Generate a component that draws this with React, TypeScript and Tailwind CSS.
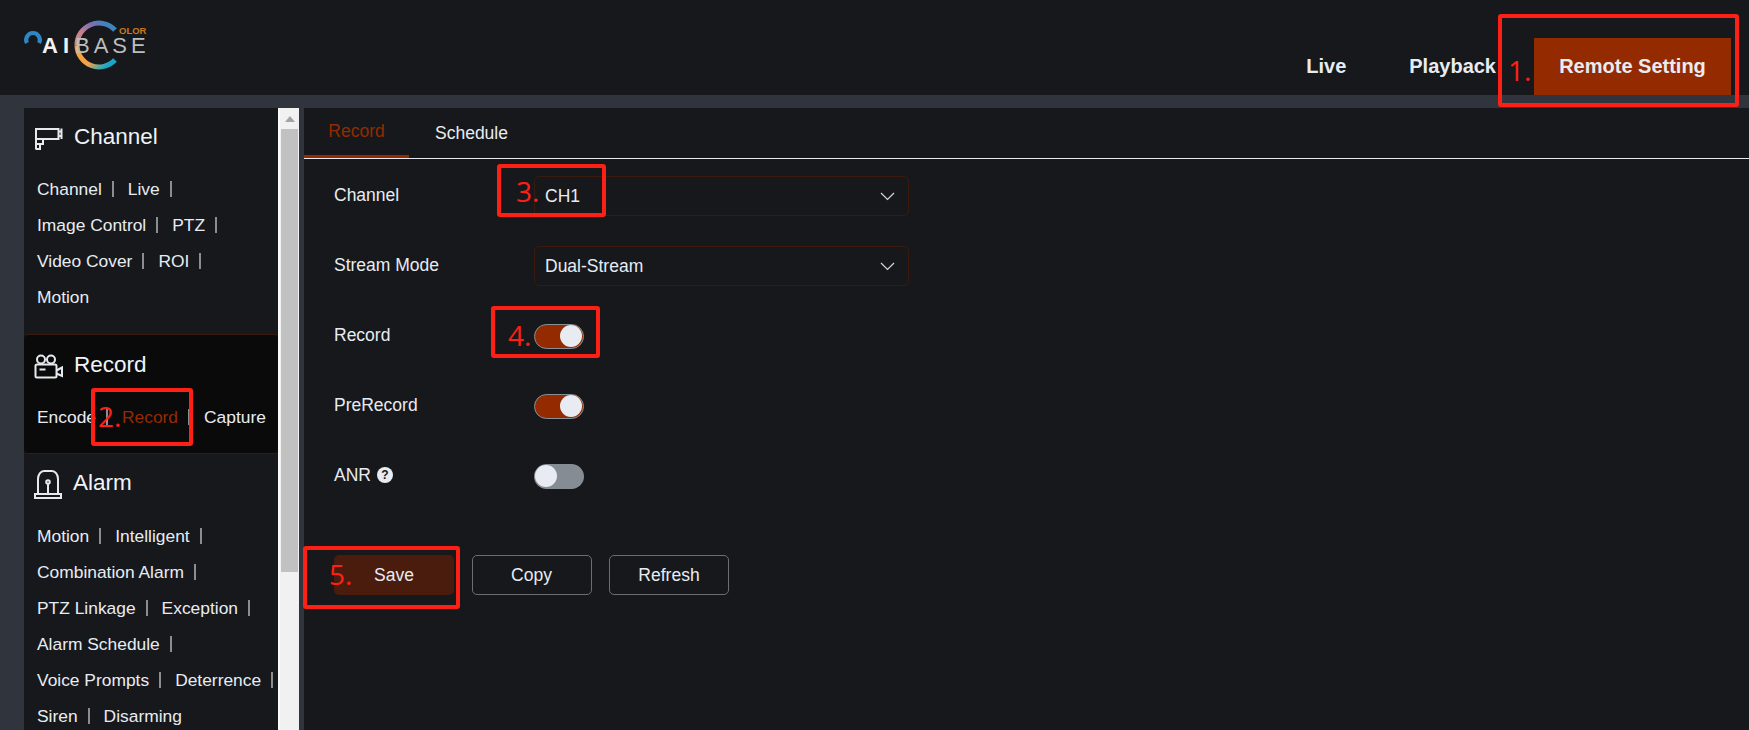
const channelLinks = [["Channel", "Live"], ["Image Control", "PTZ"], ["Video Cover", "ROI"], ["Motion"]];
const alarmLinks = [
  ["Motion", "Intelligent"],
  ["Combination Alarm"],
  ["PTZ Linkage", "Exception"],
  ["Alarm Schedule"],
  ["Voice Prompts", "Deterrence"],
  ["Siren", "Disarming"],
];

function Logo() {
  return (
    <svg width="130" height="60" viewBox="0 0 130 60" className="mt-[16px] ml-[22px]">
      <defs>
        <linearGradient id="ringTop" x1="1" y1="0" x2="0" y2="0.8">
          <stop offset="0" stopColor="#1d8fc4" />
          <stop offset="0.4" stopColor="#7a6fb4" />
          <stop offset="0.75" stopColor="#c97f8f" />
          <stop offset="1" stopColor="#c99078" />
        </linearGradient>
        <linearGradient id="ringBottom" x1="0" y1="0" x2="1" y2="0.6">
          <stop offset="0" stopColor="#f7a335" />
          <stop offset="0.6" stopColor="#f2a24a" />
          <stop offset="1" stopColor="#12a9c9" />
        </linearGradient>
      </defs>
      <path d="M5 27A6.8 6.8 0 1 1 17 27" fill="none" stroke="#2f86c4" strokeWidth="4.2" />
      <path d="M93 14A22 22 0 0 0 55 29.5" fill="none" stroke="url(#ringTop)" strokeWidth="5" />
      <path d="M55 29.5A22 22 0 0 0 93 44" fill="none" stroke="url(#ringBottom)" strokeWidth="5" />
      <text x="97" y="17.5" fontFamily="Liberation Sans, sans-serif" fontWeight="700" fontSize="9.5" fill="#c9771c">OLOR</text>
      <text x="20" y="37" fontFamily="Liberation Sans, sans-serif" fontWeight="700" fontSize="22" letterSpacing="5" fill="#f2f2f2">AI</text>
      <text x="53" y="37" fontFamily="Liberation Sans, sans-serif" fontSize="22" letterSpacing="4" fill="#bdbdbd">BASE</text>
    </svg>
  );
}

function CameraIcon() {
  return (
    <svg width="29" height="25" viewBox="0 0 29 25" fill="none" stroke="#e6e9ee" strokeWidth="2">
      <path d="M2 3h22.5v10H2z" />
      <path d="M24.5 5.5h3M24.5 10h3" />
      <path d="M27.5 2.5v10.5" />
      <path d="M9 13v5H2M2 13v10.5M2 23h4v-5" />
    </svg>
  );
}

function RecordIcon() {
  return (
    <svg width="29" height="25" viewBox="0 0 29 25" fill="none" stroke="#e6e9ee" strokeWidth="2">
      <circle cx="7" cy="5.5" r="4" />
      <circle cx="17" cy="5.5" r="4" />
      <rect x="1.5" y="10.5" width="21" height="13" rx="1.5" />
      <path d="M5.5 15.5h6" />
      <path d="M22.5 16.5l5.5 -3v8.5l-5.5 -2.5" />
    </svg>
  );
}

function AlarmIcon() {
  return (
    <svg width="28" height="29" viewBox="0 0 28 29" fill="none" stroke="#e6e9ee" strokeWidth="2">
      <path d="M4 24V9a6 8 0 0 1 6-8h8a6 8 0 0 1 6 8v15" />
      <path d="M1 24h26v4H1z" />
      <circle cx="14" cy="12" r="1.8" />
      <path d="M14 14v10" />
    </svg>
  );
}

function LinkRows({ rows, active }: { rows: string[][]; active?: string }) {
  return (
    <div className="flex flex-col pl-[13px]">
      {rows.map((row, r) => (
        <div key={row.join()} className="flex h-[36px] items-center whitespace-nowrap text-[17.4px] text-[#e8ecf2]">
          {row.map((name, i) => (
            <div key={name} className="flex items-center">
              <span className={name === active ? "text-[#942b00]" : ""}>{name}</span>
              {!(r === rows.length - 1 && i === row.length - 1) && (
                <span className="ml-[10px] mr-[14px] h-[16px] w-[2px] bg-[#8b8d91]" />
              )}
            </div>
          ))}
        </div>
      ))}
    </div>
  );
}

function SectionTitle({ icon, title }: { icon: React.ReactNode; title: string }) {
  return (
    <div className="flex items-center gap-[11px] pl-[10px] text-[22.5px] text-[#f0f3f7]">
      <span className="translate-y-[2px]">{icon}</span>
      <span>{title}</span>
    </div>
  );
}

function Sidebar() {
  return (
    <aside className="flex h-full w-[254px] flex-col overflow-hidden bg-[#16181c]">
      <section className="h-[226px] shrink-0 pt-[12px]">
        <SectionTitle icon={<CameraIcon />} title="Channel" />
        <div className="mt-[17px]">
          <LinkRows rows={channelLinks} />
        </div>
      </section>
      <section className="h-[120px] shrink-0 rounded-[4px] border-y border-[#3a1a0c] bg-[#0a0a0b] pt-[13px]">
        <SectionTitle icon={<RecordIcon />} title="Record" />
        <div className="mt-[17px]">
          <LinkRows rows={[["Encode", "Record", "Capture"]]} active="Record" />
        </div>
      </section>
      <section className="shrink-0 pt-[12px]">
        <SectionTitle icon={<AlarmIcon />} title="Alarm" />
        <div className="mt-[18px]">
          <LinkRows rows={alarmLinks} />
        </div>
      </section>
    </aside>
  );
}

function Scrollbar() {
  return (
    <div className="flex h-full w-[21px] flex-col items-center border-l-2 border-[#fafafa] bg-[#f1f1f1]">
      <div className="flex h-[21px] items-center justify-center">
        <div className="h-0 w-0 border-x-[5px] border-b-[6px] border-x-transparent border-b-[#a3a3a3]" />
      </div>
      <div className="h-[443px] w-[17px] bg-[#c1c1c1]" />
    </div>
  );
}

function Select({ value }: { value: string }) {
  return (
    <div className="flex h-[40px] w-[375px] items-center justify-between rounded-[5px] border border-[#3a1a0c] pl-[10px] pr-[13px] text-[17.5px] text-[#e8ecf2]">
      <span>{value}</span>
      <svg width="15" height="9" viewBox="0 0 15 9" fill="none" stroke="#d5d8dc" strokeWidth="1.2">
        <path d="M1 1l6.5 6.5L14 1" />
      </svg>
    </div>
  );
}

function Toggle({ on }: { on: boolean }) {
  return (
    <div
      className={
        on
          ? "flex h-[25px] w-[50px] items-center justify-end rounded-full border border-[#8a8f96] bg-[#942b00] pr-[1px]"
          : "flex h-[25px] w-[50px] items-center justify-start rounded-full bg-[#868c94] pl-[1px]"
      }
    >
      <div className="h-[22px] w-[22px] rounded-full bg-[#e8ecf2]" />
    </div>
  );
}

function FormRow({ label, children, help }: { label: string; children: React.ReactNode; help?: boolean }) {
  return (
    <div className="flex h-[40px] items-center">
      <div className="flex w-[200px] items-center gap-[6px] pb-[2px] text-[17.5px] text-[#e8ecf2]">
        <span>{label}</span>
        {help && (
          <span className="flex h-[16px] w-[16px] items-center justify-center rounded-full bg-[#e8ecf2] text-[12px] font-bold text-[#16181c]">?</span>
        )}
      </div>
      {children}
    </div>
  );
}

function Mark({ className, label, labelClass }: { className: string; label: string; labelClass: string }) {
  return (
    <div className={`absolute rounded-[3px] border-[4px] border-[#ff2015] ${className}`}>
      <span className={`absolute font-['Open_Sans',sans-serif] text-[28px] leading-none text-[#ff2015] ${labelClass}`}>{label}</span>
    </div>
  );
}

export default function App() {
  return (
    <div className="relative flex h-screen w-full flex-col overflow-hidden bg-[#2f343d] font-['Liberation_Sans',Arial,sans-serif]">
      <header className="flex h-[95px] shrink-0 justify-between bg-[#16181c]">
        <Logo />
        <nav className="flex items-end pr-[18px] text-[20px] font-bold text-[#e8ecf2]">
          <span className="flex h-[57px] items-center pb-[2px]">Live</span>
          <span className="ml-[63px] flex h-[57px] items-center pb-[2px]">Playback</span>
          <span className="ml-[38px] flex h-[57px] w-[197px] items-center justify-center bg-[#942b00] pb-[2px]">Remote Setting</span>
        </nav>
      </header>
      <div className="flex min-h-0 flex-1 pl-[24px] pt-[13px]">
        <Sidebar />
        <Scrollbar />
        <main className="ml-[5px] flex-1 bg-[#16181c]">
          <div className="flex h-[51px] border-b border-[#e8ecf2] text-[17.5px]">
            <div className="flex h-[50px] w-[105px] items-center justify-center border-b-[3px] border-[#942b00] text-[#942b00]">Record</div>
            <div className="ml-[26px] flex h-[50px] items-center text-[#e8ecf2]">Schedule</div>
          </div>
          <div className="flex flex-col gap-[30px] pl-[30px] pt-[17px]">
            <FormRow label="Channel"><Select value="CH1" /></FormRow>
            <FormRow label="Stream Mode"><Select value="Dual-Stream" /></FormRow>
            <FormRow label="Record"><Toggle on /></FormRow>
            <FormRow label="PreRecord"><Toggle on /></FormRow>
            <FormRow label="ANR" help><Toggle on={false} /></FormRow>
          </div>
          <div className="mt-[59px] flex gap-[17.5px] pl-[30px] text-[17.5px] text-[#e8ecf2]">
            <button className="h-[40px] w-[120px] rounded-[5px] bg-[#4a1c0d]">Save</button>
            <button className="h-[40px] w-[120px] rounded-[5px] border border-[#6b6d71]">Copy</button>
            <button className="h-[40px] w-[120px] rounded-[5px] border border-[#6b6d71]">Refresh</button>
          </div>
        </main>
      </div>
      <Mark className="left-[1498px] top-[14px] h-[93px] w-[241px]" label="1." labelClass="left-[6px] top-[38px]" />
      <Mark className="left-[91px] top-[388px] h-[58px] w-[102px]" label="2." labelClass="left-[3px] top-[10px]" />
      <Mark className="left-[497px] top-[164px] h-[53px] w-[109px]" label="3." labelClass="left-[15px] top-[9px]" />
      <Mark className="left-[491px] top-[306px] h-[52px] w-[109px]" label="4." labelClass="left-[13px] top-[11px]" />
      <Mark className="left-[303px] top-[546px] h-[63px] w-[157px]" label="5." labelClass="left-[22px] top-[10px]" />
    </div>
  );
}
